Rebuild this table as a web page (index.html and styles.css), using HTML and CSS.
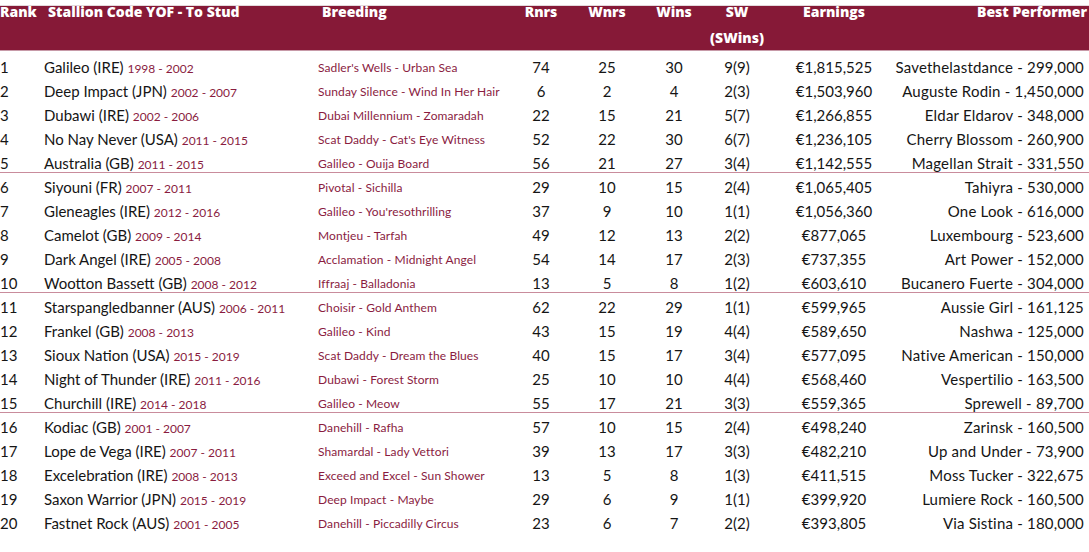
FILE: index.html
```html
<!DOCTYPE html>
<html>
<head>
<meta charset="utf-8">
<link rel="stylesheet" href="styles.css">
</head>
<body>
<div class="page">
  <div class="table">
    <div class="head">
      <div class="hc rank">Rank</div>
      <div class="hc stallion">Stallion Code YOF - To Stud</div>
      <div class="hc breeding">Breeding</div>
      <div class="hc num">Rnrs</div>
      <div class="hc num">Wnrs</div>
      <div class="hc num">Wins</div>
      <div class="hc num sw">SW<br>(SWins)</div>
      <div class="hc num">Earnings</div>
      <div class="hc best">Best Performer</div>
    </div>
    <div class="body">
      <div class="row"><div>1</div><div>Galileo (IRE) <span class="yr">1998 - 2002</span></div><div class="br">Sadler's Wells - Urban Sea</div><div class="n">74</div><div class="n">25</div><div class="n">30</div><div class="n sw">9(9)</div><div class="n">€1,815,525</div><div class="bp">Savethelastdance - 299,000</div></div>
      <div class="row"><div>2</div><div>Deep Impact (JPN) <span class="yr">2002 - 2007</span></div><div class="br">Sunday Silence - Wind In Her Hair</div><div class="n">6</div><div class="n">2</div><div class="n">4</div><div class="n sw">2(3)</div><div class="n">€1,503,960</div><div class="bp">Auguste Rodin - 1,450,000</div></div>
      <div class="row"><div>3</div><div>Dubawi (IRE) <span class="yr">2002 - 2006</span></div><div class="br">Dubai Millennium - Zomaradah</div><div class="n">22</div><div class="n">15</div><div class="n">21</div><div class="n sw">5(7)</div><div class="n">€1,266,855</div><div class="bp">Eldar Eldarov - 348,000</div></div>
      <div class="row"><div>4</div><div>No Nay Never (USA) <span class="yr">2011 - 2015</span></div><div class="br">Scat Daddy - Cat's Eye Witness</div><div class="n">52</div><div class="n">22</div><div class="n">30</div><div class="n sw">6(7)</div><div class="n">€1,236,105</div><div class="bp">Cherry Blossom - 260,900</div></div>
      <div class="row end"><div>5</div><div>Australia (GB) <span class="yr">2011 - 2015</span></div><div class="br">Galileo - Ouija Board</div><div class="n">56</div><div class="n">21</div><div class="n">27</div><div class="n sw">3(4)</div><div class="n">€1,142,555</div><div class="bp">Magellan Strait - 331,550</div></div>
      <div class="row"><div>6</div><div>Siyouni (FR) <span class="yr">2007 - 2011</span></div><div class="br">Pivotal - Sichilla</div><div class="n">29</div><div class="n">10</div><div class="n">15</div><div class="n sw">2(4)</div><div class="n">€1,065,405</div><div class="bp">Tahiyra - 530,000</div></div>
      <div class="row"><div>7</div><div>Gleneagles (IRE) <span class="yr">2012 - 2016</span></div><div class="br">Galileo - You'resothrilling</div><div class="n">37</div><div class="n">9</div><div class="n">10</div><div class="n sw">1(1)</div><div class="n">€1,056,360</div><div class="bp">One Look - 616,000</div></div>
      <div class="row"><div>8</div><div>Camelot (GB) <span class="yr">2009 - 2014</span></div><div class="br">Montjeu - Tarfah</div><div class="n">49</div><div class="n">12</div><div class="n">13</div><div class="n sw">2(2)</div><div class="n">€877,065</div><div class="bp">Luxembourg - 523,600</div></div>
      <div class="row"><div>9</div><div>Dark Angel (IRE) <span class="yr">2005 - 2008</span></div><div class="br">Acclamation - Midnight Angel</div><div class="n">54</div><div class="n">14</div><div class="n">17</div><div class="n sw">2(3)</div><div class="n">€737,355</div><div class="bp">Art Power - 152,000</div></div>
      <div class="row end"><div>10</div><div>Wootton Bassett (GB) <span class="yr">2008 - 2012</span></div><div class="br">Iffraaj - Balladonia</div><div class="n">13</div><div class="n">5</div><div class="n">8</div><div class="n sw">1(2)</div><div class="n">€603,610</div><div class="bp">Bucanero Fuerte - 304,000</div></div>
      <div class="row"><div>11</div><div>Starspangledbanner (AUS) <span class="yr">2006 - 2011</span></div><div class="br">Choisir - Gold Anthem</div><div class="n">62</div><div class="n">22</div><div class="n">29</div><div class="n sw">1(1)</div><div class="n">€599,965</div><div class="bp">Aussie Girl - 161,125</div></div>
      <div class="row"><div>12</div><div>Frankel (GB) <span class="yr">2008 - 2013</span></div><div class="br">Galileo - Kind</div><div class="n">43</div><div class="n">15</div><div class="n">19</div><div class="n sw">4(4)</div><div class="n">€589,650</div><div class="bp">Nashwa - 125,000</div></div>
      <div class="row"><div>13</div><div>Sioux Nation (USA) <span class="yr">2015 - 2019</span></div><div class="br">Scat Daddy - Dream the Blues</div><div class="n">40</div><div class="n">15</div><div class="n">17</div><div class="n sw">3(4)</div><div class="n">€577,095</div><div class="bp">Native American - 150,000</div></div>
      <div class="row"><div>14</div><div>Night of Thunder (IRE) <span class="yr">2011 - 2016</span></div><div class="br">Dubawi - Forest Storm</div><div class="n">25</div><div class="n">10</div><div class="n">10</div><div class="n sw">4(4)</div><div class="n">€568,460</div><div class="bp">Vespertilio - 163,500</div></div>
      <div class="row end"><div>15</div><div>Churchill (IRE) <span class="yr">2014 - 2018</span></div><div class="br">Galileo - Meow</div><div class="n">55</div><div class="n">17</div><div class="n">21</div><div class="n sw">3(3)</div><div class="n">€559,365</div><div class="bp">Sprewell - 89,700</div></div>
      <div class="row"><div>16</div><div>Kodiac (GB) <span class="yr">2001 - 2007</span></div><div class="br">Danehill - Rafha</div><div class="n">57</div><div class="n">10</div><div class="n">15</div><div class="n sw">2(4)</div><div class="n">€498,240</div><div class="bp">Zarinsk - 160,500</div></div>
      <div class="row"><div>17</div><div>Lope de Vega (IRE) <span class="yr">2007 - 2011</span></div><div class="br">Shamardal - Lady Vettori</div><div class="n">39</div><div class="n">13</div><div class="n">17</div><div class="n sw">3(3)</div><div class="n">€482,210</div><div class="bp">Up and Under - 73,900</div></div>
      <div class="row"><div>18</div><div>Excelebration (IRE) <span class="yr">2008 - 2013</span></div><div class="br">Exceed and Excel - Sun Shower</div><div class="n">13</div><div class="n">5</div><div class="n">8</div><div class="n sw">1(3)</div><div class="n">€411,515</div><div class="bp">Moss Tucker - 322,675</div></div>
      <div class="row"><div>19</div><div>Saxon Warrior (JPN) <span class="yr">2015 - 2019</span></div><div class="br">Deep Impact - Maybe</div><div class="n">29</div><div class="n">6</div><div class="n">9</div><div class="n sw">1(1)</div><div class="n">€399,920</div><div class="bp">Lumiere Rock - 160,500</div></div>
      <div class="row"><div>20</div><div>Fastnet Rock (AUS) <span class="yr">2001 - 2005</span></div><div class="br">Danehill - Piccadilly Circus</div><div class="n">23</div><div class="n">6</div><div class="n">7</div><div class="n sw">2(2)</div><div class="n">€393,805</div><div class="bp">Via Sistina - 180,000</div></div>
    </div>
  </div>
</div>
</body>
</html>
```

FILE: styles.css
```css
html, body {
  margin: 0;
  padding: 0;
  background: #ffffff;
}
body {
  font-family: Lato, "Open Sans", "Liberation Sans", sans-serif;
  color: #151515;
  width: 1089px;
  height: 552px;
  overflow: hidden;
}
.page {
  padding-top: 5px;
}
.head,
.row {
  display: grid;
  grid-template-columns: 44px 274px 192px 62px 70px 64px 82px 92px 1fr;
  padding-right: 2px;
}
.head {
  height: 44px;
  background: #861937;
  border-top: 1px solid #e3d9dc;
  border-bottom: 1px solid #c79aa8;
  color: #ffffff;
  font-family: "Open Sans", Lato, "Liberation Sans", sans-serif;
  font-weight: 800;
  font-size: 14px;
}
.hc {
  line-height: 26px;
  margin-top: -7px;
  white-space: nowrap;
}
.hc.stallion,
.hc.breeding {
  padding-left: 4px;
}
.hc.num {
  text-align: center;
}
.sw {
  padding-right: 20px;
}
.hc.best {
  text-align: right;
}
.body {
  padding-top: 2px;
}
.row {
  box-sizing: border-box;
  height: 24px;
  padding-top: 4px;
  line-height: 20px;
  font-size: 15px;
  white-space: nowrap;
}
.row.end {
  border-bottom: 1px solid #c98c9c;
}
.yr {
  font-size: 12px;
  color: #8a1c3f;
}
.br {
  font-size: 12px;
  color: #8a1c3f;
  letter-spacing: 0.1px;
  padding-top: 1px;
}
.n {
  text-align: center;
}
.bp {
  text-align: right;
  padding-right: 3px;
  letter-spacing: 0.2px;
}
```
